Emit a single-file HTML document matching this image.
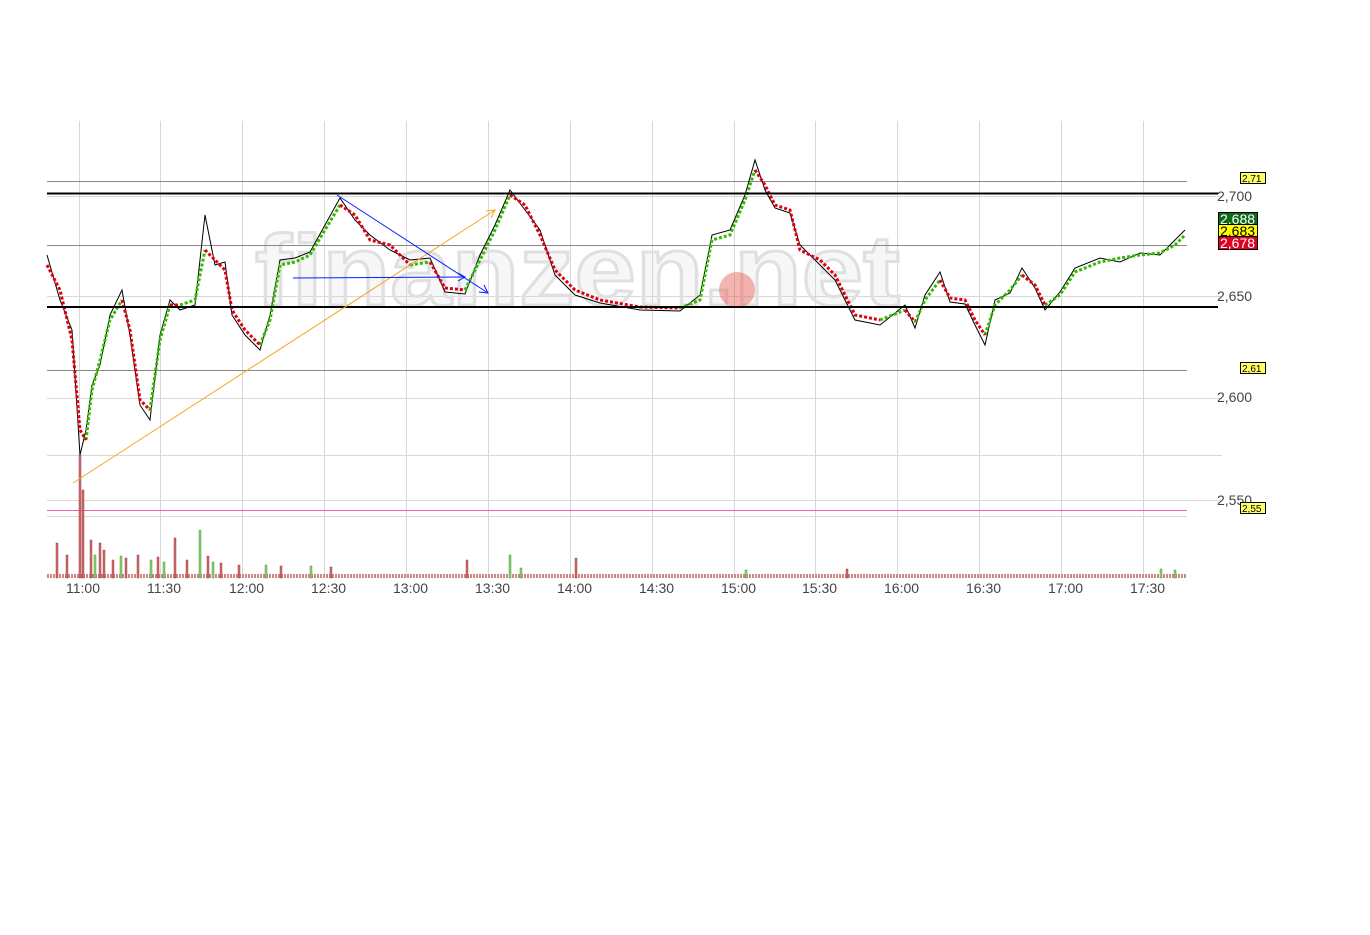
<!DOCTYPE html>
<html><head><meta charset="utf-8"><style>
html,body{margin:0;padding:0;background:#fff;width:1370px;height:935px;overflow:hidden}
svg{display:block;font-family:"Liberation Sans",sans-serif}
</style></head><body>
<svg width="1370" height="935" xmlns="http://www.w3.org/2000/svg">
<defs>
<pattern id="vp" x="47" y="0" width="3" height="935" patternUnits="userSpaceOnUse"><rect x="0" y="574" width="2" height="4" fill="#c88"/></pattern>
</defs>
<g stroke="#d8d8d8" stroke-width="1">
<line x1="79.5" y1="121" x2="79.5" y2="578"/><line x1="160.5" y1="121" x2="160.5" y2="578"/><line x1="242.5" y1="121" x2="242.5" y2="578"/><line x1="324.5" y1="121" x2="324.5" y2="578"/><line x1="406.5" y1="121" x2="406.5" y2="578"/><line x1="488.5" y1="121" x2="488.5" y2="578"/><line x1="570.5" y1="121" x2="570.5" y2="578"/><line x1="652.5" y1="121" x2="652.5" y2="578"/><line x1="734.5" y1="121" x2="734.5" y2="578"/><line x1="815.5" y1="121" x2="815.5" y2="578"/><line x1="897.5" y1="121" x2="897.5" y2="578"/><line x1="979.5" y1="121" x2="979.5" y2="578"/><line x1="1061.5" y1="121" x2="1061.5" y2="578"/><line x1="1143.5" y1="121" x2="1143.5" y2="578"/>
<line x1="47" y1="196.5" x2="1222" y2="196.5"/><line x1="47" y1="296.5" x2="1222" y2="296.5"/><line x1="47" y1="398.5" x2="1222" y2="398.5"/><line x1="47" y1="455.5" x2="1222" y2="455.5"/><line x1="47" y1="500.5" x2="1222" y2="500.5"/><line x1="47" y1="516.5" x2="1187" y2="516.5"/>
</g>
<text x="255" y="305" font-size="100" font-weight="bold" fill="rgba(215,215,215,0.2)" stroke="#e0e0e0" stroke-width="3" textLength="645" lengthAdjust="spacingAndGlyphs">finanzen.net</text>
<circle cx="737" cy="290" r="18" fill="rgba(230,90,80,0.45)"/>
<g stroke="#888" stroke-width="1"><line x1="47" y1="181.5" x2="1187" y2="181.5"/><line x1="47" y1="245.5" x2="1187" y2="245.5"/><line x1="47" y1="370.5" x2="1187" y2="370.5"/></g>
<line x1="47" y1="510.5" x2="1187" y2="510.5" stroke="#f060b0"/>

<path fill="none" stroke="#000" stroke-width="1" d="M47 255 L60 300 L72 330 L80 455 L86 430 L92 385 L100 365 L110 315 L122 290 L130 335 L140 405 L150 420 L160 335 L170 300 L180 310 L195 305 L205 215 L215 265 L225 262 L232 315 L245 335 L260 350 L270 315 L280 260 L295 258 L310 252 L325 225 L340 198 L355 220 L370 235 L390 250 L410 260 L430 258 L445 292 L465 294 L480 255 L495 225 L510 190 L525 210 L540 230 L555 275 L575 295 L600 303 L640 310 L680 311 L700 295 L712 235 L730 230 L745 195 L755 160 L765 190 L775 208 L790 213 L800 245 L820 265 L835 280 L845 300 L855 320 L880 325 L905 305 L915 328 L925 295 L940 272 L950 302 L965 304 L975 325 L985 345 L995 300 L1010 293 L1022 268 L1035 288 L1045 310 L1060 292 L1075 268 L1100 258 L1120 262 L1140 253 L1160 255 L1175 240 L1185 230"/>
<path fill="none" stroke="#33bb00" stroke-width="3" stroke-dasharray="3 2" d="M86 440 L92 390 L100 360 L110 320 L122 300 M150 410 L160 340 L170 305 M180 305 L195 300 L205 250 M260 345 L270 320 L280 265 L295 262 L310 255 L325 230 L340 205 M410 265 L430 262 M465 290 L480 260 L495 230 L510 195 M680 308 L700 300 L712 240 L730 235 L745 200 L755 170 M880 320 L905 310 M915 322 L925 300 L940 280 M985 335 L995 305 L1010 290 L1022 275 M1045 305 L1060 295 L1075 272 L1100 262 L1120 258 L1140 255 L1160 253 L1175 245 L1185 235"/>
<path fill="none" stroke="#dd0010" stroke-width="3" stroke-dasharray="3 2" d="M47 265 L60 290 L72 340 L80 430 L86 440 M122 300 L130 330 L140 400 L150 410 M170 305 L180 305 M205 250 L215 260 L225 270 L232 310 L245 330 L260 345 M340 205 L355 215 L370 240 L390 245 L410 265 M430 262 L445 288 L465 290 M510 195 L525 205 L540 235 L555 270 L575 290 L600 300 L640 307 L680 308 M755 170 L765 185 L775 205 L790 210 L800 250 L820 260 L835 275 L845 295 L855 315 L880 320 M905 310 L915 322 M940 280 L950 298 L965 300 L975 320 L985 335 M1022 275 L1035 285 L1045 305"/>

<rect x="47" y="570" width="1140" height="8" fill="url(#vp)"/>
<g fill="#c87070" stroke="#a02020" stroke-width="0.4">
<rect x="79" y="455" width="2" height="123"/><rect x="82" y="490" width="2" height="88"/><rect x="56" y="543" width="2" height="35"/><rect x="66" y="555" width="2" height="23"/><rect x="90" y="540" width="2" height="38"/><rect x="99" y="543" width="2" height="35"/><rect x="103" y="550" width="2" height="28"/><rect x="112" y="560" width="2" height="18"/><rect x="125" y="558" width="2" height="20"/><rect x="137" y="555" width="2" height="23"/><rect x="157" y="557" width="2" height="21"/><rect x="174" y="538" width="2" height="40"/><rect x="186" y="560" width="2" height="18"/><rect x="207" y="556" width="2" height="22"/><rect x="220" y="563" width="2" height="15"/><rect x="238" y="565" width="2" height="13"/><rect x="280" y="566" width="2" height="12"/><rect x="330" y="567" width="2" height="11"/><rect x="466" y="560" width="2" height="18"/><rect x="575" y="558" width="2" height="20"/><rect x="846" y="569" width="2" height="9"/>
</g>
<g fill="#8fd07a" stroke="#2a8a10" stroke-width="0.4">
<rect x="94" y="555" width="2" height="23"/><rect x="120" y="556" width="2" height="22"/><rect x="150" y="560" width="2" height="18"/><rect x="163" y="562" width="2" height="16"/><rect x="199" y="530" width="2" height="48"/><rect x="212" y="562" width="2" height="16"/><rect x="265" y="565" width="2" height="13"/><rect x="310" y="566" width="2" height="12"/><rect x="509" y="555" width="2" height="23"/><rect x="520" y="568" width="2" height="10"/><rect x="745" y="570" width="2" height="8"/><rect x="1160" y="569" width="2" height="9"/><rect x="1174" y="570" width="2" height="8"/>
</g>

<line x1="47" y1="193.5" x2="1218" y2="193.5" stroke="#000" stroke-width="2"/>
<line x1="47" y1="307" x2="1218" y2="307" stroke="#000" stroke-width="2"/>
<line x1="73" y1="483" x2="495" y2="210" stroke="#f5a623" stroke-width="1"/>
<path d="M486 211 L495 210 L491 218" fill="none" stroke="#f5a623"/>
<line x1="337" y1="195" x2="488" y2="293" stroke="#0020ff" stroke-width="1"/>
<path d="M479 292 L488 293 L484 285" fill="none" stroke="#0020ff"/>
<line x1="293" y1="278" x2="465" y2="277" stroke="#0020ff" stroke-width="1"/>
<path d="M458 273 L465 277 L458 281" fill="none" stroke="#0020ff"/>
<g font-size="14" fill="#444">
<text x="1217" y="201">2,700</text><text x="1217" y="301">2,650</text><text x="1217" y="402">2,600</text><text x="1217" y="505">2,550</text>
<text x="66" y="593">11:00</text><text x="147" y="593">11:30</text><text x="229" y="593">12:00</text><text x="311" y="593">12:30</text><text x="393" y="593">13:00</text><text x="475" y="593">13:30</text><text x="557" y="593">14:00</text><text x="639" y="593">14:30</text><text x="721" y="593">15:00</text><text x="802" y="593">15:30</text><text x="884" y="593">16:00</text><text x="966" y="593">16:30</text><text x="1048" y="593">17:00</text><text x="1130" y="593">17:30</text>
</g>
<g font-size="10">
<rect x="1240.5" y="172.5" width="25" height="11" fill="#ffff66" stroke="#000"/><text x="1242" y="182">2,71</text>
<rect x="1240.5" y="362.5" width="25" height="11" fill="#ffff66" stroke="#000"/><text x="1242" y="372">2,61</text>
<rect x="1240.5" y="502.5" width="25" height="11" fill="#ffff66" stroke="#000"/><text x="1242" y="512">2,55</text>
</g>
<g font-size="14">
<rect x="1218.5" y="212.5" width="39" height="12" fill="#0b6b1a" stroke="#000"/><text x="1220" y="224" fill="#fff">2,688</text>
<rect x="1218.5" y="224.5" width="39" height="12" fill="#ffff00" stroke="#000"/><text x="1220" y="236" fill="#000">2,683</text>
<rect x="1218.5" y="236.5" width="39" height="13" fill="#e00020" stroke="#000"/><text x="1220" y="248" fill="#fff">2,678</text>
</g>
</svg>
</body></html>
